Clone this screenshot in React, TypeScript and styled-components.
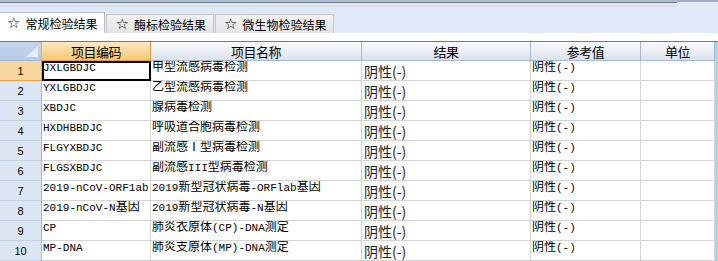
import React from 'react';
import styled, { createGlobalStyle } from 'styled-components';

const GlobalStyle = createGlobalStyle`
  html, body {
    margin: 0;
    padding: 0;
    background: #ffffff;
  }
  body {
    font-family: "Noto Sans CJK SC", "Liberation Sans", sans-serif;
    color: #000;
  }
`;

const COLS = '42px 109px 211px 169px 110px 74px 1fr';

const rows: [string, string][] = [
  ['JXLGBDJC', '甲型流感病毒检测'],
  ['YXLGBDJC', '乙型流感病毒检测'],
  ['XBDJC', '腺病毒检测'],
  ['HXDHBBDJC', '呼吸道合胞病毒检测'],
  ['FLGYXBDJC', '副流感Ⅰ型病毒检测'],
  ['FLGSXBDJC', '副流感III型病毒检测'],
  ['2019-nCoV-ORF1ab', '2019新型冠状病毒-ORFlab基因'],
  ['2019-nCoV-N基因', '2019新型冠状病毒-N基因'],
  ['CP', '肺炎衣原体(CP)-DNA测定'],
  ['MP-DNA', '肺炎支原体(MP)-DNA测定'],
];

const tabs = ['常规检验结果', '酶标检验结果', '微生物检验结果'];

const Page = styled.div`
  width: 718px;
  height: 261px;
  overflow: hidden;
  display: flex;
  flex-direction: column;
`;

const TopBar = styled.div`
  height: 7px;
  display: flex;
  flex-shrink: 0;
`;

const TopBarMain = styled.div`
  width: 677px;
  background: linear-gradient(
    to bottom,
    #b4bcc9 0,
    #b4bcc9 2px,
    #6e7b8f 2px,
    #6e7b8f 3px,
    #e6e9ef 3px,
    #d9dee7 7px
  );
`;

const TopBarEnd = styled.div`
  flex: 1;
  background: linear-gradient(to bottom, #9fb0c8 0, #9fb0c8 2px, #e6e9ef 2px, #dfe9f9 7px);
`;

const TabStrip = styled.div`
  height: 26px;
  flex-shrink: 0;
  display: flex;
  align-items: flex-end;
  background: #dfe9f9;
`;

const Tab = styled.div<{ $active?: boolean }>`
  box-sizing: border-box;
  height: ${(p) => (p.$active ? '21px' : '19px')};
  display: flex;
  align-items: center;
  gap: 5px;
  padding: 0 7px 0 ${(p) => (p.$active ? '7px' : '8px')};
  background: ${(p) => (p.$active ? '#ffffff' : 'linear-gradient(#f2f2f2, #e4e4e4)')};
  border: 1px solid ${(p) => (p.$active ? '#b7bfcb' : '#c6c6c6')};
  border-bottom: none;
  border-left: ${(p) => (p.$active ? 'none' : '1px solid #c6c6c6')};
  margin-right: 1px;
  font-size: 12px;
  line-height: 15px;
  white-space: nowrap;
  padding-top: ${(p) => (p.$active ? '1px' : '0')};
`;

const Star = styled.span`
  font-family: "DejaVu Sans", sans-serif;
  font-size: 15px;
`;

const Gap = styled.div`
  height: 8px;
  flex-shrink: 0;
  background: #ffffff;
`;

const Grid = styled.div`
  border-top: 1px solid #777777;
  display: flex;
  flex-direction: column;
`;

const HeaderRow = styled.div`
  display: grid;
  grid-template-columns: ${COLS};
  height: 19px;
`;

const HeaderCell = styled.div<{ $selected?: boolean }>`
  box-sizing: border-box;
  display: flex;
  align-items: center;
  justify-content: center;
  font-size: 13px;
  letter-spacing: -0.5px;
  line-height: 15px;
  background: ${(p) =>
    p.$selected ? 'linear-gradient(#fce8c2, #f6c874)' : 'linear-gradient(#f9fafc, #dce3ed)'};
  border-right: 1px solid ${(p) => (p.$selected ? '#f29b3a' : '#a3b8cf')};
  border-bottom: 1px solid ${(p) => (p.$selected ? '#f29b3a' : '#a3b8cf')};
`;

const Corner = styled.div`
  box-sizing: border-box;
  position: relative;
  background: linear-gradient(#c4d5ec, #b7cbe8);
  border-right: 1px solid #a3b8cf;
  border-bottom: 1px solid #a3b8cf;

  &::after {
    content: '';
    position: absolute;
    right: 3px;
    bottom: 3px;
    width: 12px;
    height: 11px;
    background: #e4ecf7;
    clip-path: polygon(100% 0, 100% 100%, 0 100%);
  }
`;

const Row = styled.div`
  display: grid;
  grid-template-columns: ${COLS};
  height: 20px;
`;

const RowNum = styled.div<{ $selected?: boolean }>`
  box-sizing: border-box;
  display: flex;
  justify-content: center;
  padding-top: 4px;
  font-family: "Liberation Sans", sans-serif;
  font-size: 11px;
  line-height: 13px;
  background: ${(p) => (p.$selected ? '#f9d7a0' : '#dde7f4')};
  border-right: 1px solid #a3b8cf;
  border-bottom: 1px solid ${(p) => (p.$selected ? '#f1a04a' : '#c2d1e4')};
`;

const Cell = styled.div`
  box-sizing: border-box;
  overflow: hidden;
  white-space: nowrap;
  border-right: 1px solid #d4d4d4;
  border-bottom: 1px solid #d4d4d4;
  background: #ffffff;
`;

const TextCell = styled(Cell)<{ $focused?: boolean }>`
  padding-left: 1px;
  font-family: "Liberation Mono", "Noto Sans CJK SC", monospace;
  font-size: 12px;
  line-height: 14px;
  outline: ${(p) => (p.$focused ? '2px solid #000' : 'none')};
  outline-offset: -2px;
`;

const ResultCell = styled(Cell)`
  padding: 1px 0 0 2px;
  font-size: 14px;
  line-height: 18px;
  color: #1c1c1c;
`;

const Edge = styled.div`
  background: #a9d6e6;
`;

const Half = styled.span`
  font-family: "Liberation Mono", monospace;
  font-size: 11px;
`;

function Mixed({ text }: { text: string }) {
  const parts = text.split(/([\x00-\x7F]+)/).filter(Boolean);
  return (
    <>
      {parts.map((part, i) =>
        /^[\x00-\x7F]+$/.test(part) ? <Half key={i}>{part}</Half> : <span key={i}>{part}</span>
      )}
    </>
  );
}

export default function App() {
  return (
    <Page>
      <GlobalStyle />
      <TopBar>
        <TopBarMain />
        <TopBarEnd />
      </TopBar>
      <TabStrip>
        {tabs.map((t, i) => (
          <Tab key={t} $active={i === 0}>
            <Star>☆</Star>
            <span>{t}</span>
          </Tab>
        ))}
      </TabStrip>
      <Gap />
      <Grid>
        <HeaderRow>
          <Corner />
          <HeaderCell $selected>项目编码</HeaderCell>
          <HeaderCell>项目名称</HeaderCell>
          <HeaderCell>结果</HeaderCell>
          <HeaderCell>参考值</HeaderCell>
          <HeaderCell>单位</HeaderCell>
          <Edge />
        </HeaderRow>
        {rows.map(([code, name], i) => (
          <Row key={code}>
            <RowNum $selected={i === 0}>{i + 1}</RowNum>
            <TextCell $focused={i === 0}>
              <Mixed text={code} />
            </TextCell>
            <TextCell>
              <Mixed text={name} />
            </TextCell>
            <ResultCell>阴性(-)</ResultCell>
            <TextCell>
              <Mixed text="阴性(-)" />
            </TextCell>
            <Cell />
            <Edge />
          </Row>
        ))}
      </Grid>
    </Page>
  );
}
